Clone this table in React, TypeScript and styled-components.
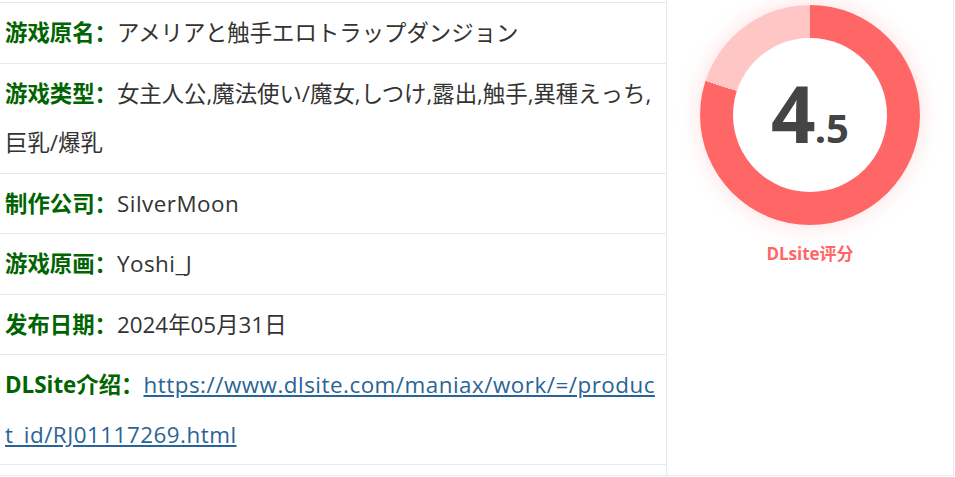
import React from "react";
import styled, { createGlobalStyle } from "styled-components";

const Global = createGlobalStyle`
  html, body { margin: 0; padding: 0; background: #fff; }
  body { font-family: "Open Sans", "Noto Sans CJK SC", sans-serif; }
`;

const Frame = styled.div`
  width: 954px;
  display: flex;
  border-right: 1px solid #e3eaf2;
  border-bottom: 1px solid #e3eaf2;
  box-sizing: border-box;
`;

const InfoColumn = styled.div`
  width: 667px;
  flex: none;
  box-sizing: border-box;
  padding-top: 2px;
  padding-bottom: 10px;
  border-right: 1px solid #e3eaf2;
`;

const Row = styled.div`
  border-top: 1px solid #e3eaf2;
  padding: 5px 6px 5px 5px;
  font-size: 22.4px;
  line-height: 49.5px;
  color: #333;
  font-family: "Open Sans", "Noto Sans CJK JP", sans-serif;
  &:last-child { border-bottom: 1px solid #e3eaf2; }
`;

const Label = styled.b`
  color: #006400;
  font-weight: 700;
  font-family: "Open Sans", "Noto Sans CJK SC", sans-serif;
`;

const Latin = styled.span`
  letter-spacing: 0.5px;
`;

const Link = styled.a`
  color: #2a6496;
  text-decoration: underline;
  word-break: break-all;
  letter-spacing: 0.5px;
`;

const ScorePanel = styled.div`
  flex: 1;
  display: flex;
  flex-direction: column;
  align-items: center;
  padding-top: 5px;
`;

const Donut = styled.div<{ $pct: number }>`
  width: 220px;
  height: 220px;
  border-radius: 50%;
  background: conic-gradient(#ff6666 0 ${(p) => p.$pct * 360}deg, #ffc6c6 ${(p) => p.$pct * 360}deg 360deg);
  box-shadow: 0 0 22px rgba(255, 102, 102, 0.22);
  display: flex;
  align-items: center;
  justify-content: center;
`;

const Hole = styled.div`
  width: 154px;
  height: 154px;
  border-radius: 50%;
  background: #fff;
  display: flex;
  align-items: center;
  justify-content: center;
  color: #444;
  font-family: "Open Sans", sans-serif;
  font-weight: 700;
`;

const Big = styled.span`
  font-size: 78px;
  line-height: 1;
  letter-spacing: -1px;
`;

const Small = styled.span`
  font-size: 40px;
  line-height: 1;
`;

const ScoreText = styled.div`
  display: flex;
  align-items: baseline;
  transform: translateY(-2px);
`;

const Caption = styled.div`
  margin-top: 15px;
  font-size: 17px;
  font-weight: 700;
  color: #ff6666;
  font-family: "Open Sans", "Noto Sans CJK SC", sans-serif;
`;

const rows: { label: string; value: React.ReactNode }[] = [
  { label: "游戏原名：", value: "アメリアと触手エロトラップダンジョン" },
  { label: "游戏类型：", value: "女主人公,魔法使い/魔女,しつけ,露出,触手,異種えっち,巨乳/爆乳" },
  { label: "制作公司：", value: <Latin>SilverMoon</Latin> },
  { label: "游戏原画：", value: <Latin>Yoshi_J</Latin> },
  { label: "发布日期：", value: "2024年05月31日" },
  {
    label: "DLSite介绍：",
    value: (
      <Link href="#">https://www.dlsite.com/maniax/work/=/product_id/RJ01117269.html</Link>
    ),
  },
];

export default function App() {
  return (
    <>
      <Global />
      <Frame>
        <InfoColumn>
          {rows.map((r) => (
            <Row key={r.label}>
              <Label>{r.label}</Label>
              {r.value}
            </Row>
          ))}
        </InfoColumn>
        <ScorePanel>
          <Donut $pct={0.8}>
            <Hole>
              <ScoreText>
                <Big>4</Big>
                <Small>.5</Small>
              </ScoreText>
            </Hole>
          </Donut>
          <Caption>DLsite评分</Caption>
        </ScorePanel>
      </Frame>
    </>
  );
}
